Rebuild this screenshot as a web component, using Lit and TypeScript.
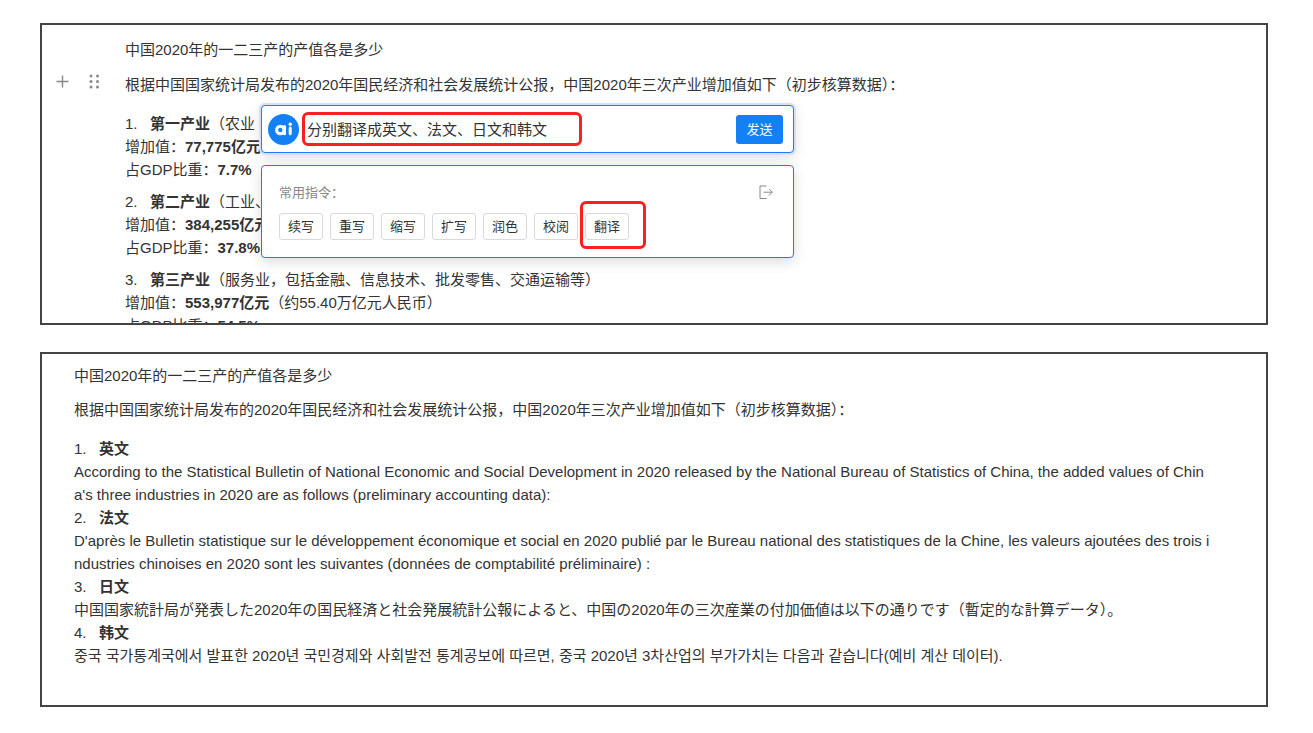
import { LitElement, html, svg, css } from "lit";
import { customElement } from "lit/decorators.js";

interface Industry {
  name: string;
  note: string;
  value: string;
  valueNote: string;
  share: string;
}

interface Translation {
  name: string;
  lang: string;
  text: string;
}

const TITLE = "中国2020年的一二三产的产值各是多少";
const INTRO =
  "根据中国国家统计局发布的2020年国民经济和社会发展统计公报，中国2020年三次产业增加值如下（初步核算数据）：";

const INDUSTRIES: Industry[] = [
  { name: "第一产业", note: "（农业", value: "77,775亿元", valueNote: "", share: "7.7%" },
  { name: "第二产业", note: "（工业、", value: "384,255亿元", valueNote: "", share: "37.8%" },
  {
    name: "第三产业",
    note: "（服务业，包括金融、信息技术、批发零售、交通运输等）",
    value: "553,977亿元",
    valueNote: "（约55.40万亿元人民币）",
    share: "54.5%",
  },
];

const TRANSLATIONS: Translation[] = [
  {
    name: "英文",
    lang: "en",
    text: "According to the Statistical Bulletin of National Economic and Social Development in 2020 released by the National Bureau of Statistics of China, the added values of China's three industries in 2020 are as follows (preliminary accounting data):",
  },
  {
    name: "法文",
    lang: "fr",
    text: "D'après le Bulletin statistique sur le développement économique et social en 2020 publié par le Bureau national des statistiques de la Chine, les valeurs ajoutées des trois industries chinoises en 2020 sont les suivantes (données de comptabilité préliminaire) :",
  },
  {
    name: "日文",
    lang: "ja",
    text: "中国国家統計局が発表した2020年の国民経済と社会発展統計公報によると、中国の2020年の三次産業の付加価値は以下の通りです（暫定的な計算データ）。",
  },
  {
    name: "韩文",
    lang: "ko",
    text: "중국 국가통계국에서 발표한 2020년 국민경제와 사회발전 통계공보에 따르면, 중국 2020년 3차산업의 부가가치는 다음과 같습니다(예비 계산 데이터).",
  },
];

const COMMANDS = ["续写", "重写", "缩写", "扩写", "润色", "校阅", "翻译"];

@customElement("ai-assistant")
class AiAssistant extends LitElement {
  static styles = css`
    :host {
      display: flex;
      flex-direction: column;
      gap: 12px;
      color: #333;
    }
    .prompt,
    .menu {
      box-sizing: border-box;
      background: #fff;
      border: 1px solid #1a7df5;
      border-radius: 4px;
    }
    .prompt {
      display: flex;
      align-items: center;
      gap: 3px;
      height: 48px;
      padding: 0 10px 0 6px;
      box-shadow: 0 0 0 2px #d6e0fb, 0 4px 14px rgba(0, 0, 0, 0.14);
    }
    .logo {
      flex: none;
      width: 31px;
      height: 31px;
    }
    .field {
      display: flex;
      flex: none;
      box-sizing: border-box;
      width: 280px;
      height: 34px;
      border: 3px solid #fb2020;
      border-radius: 6px;
    }
    .input {
      flex: 1;
      min-width: 0;
      padding: 0 2px;
      border: 0;
      outline: 0;
      background: none;
      color: inherit;
      font: inherit;
    }
    .send {
      margin-left: auto;
      width: 47px;
      height: 29px;
      padding: 0;
      border: 0;
      border-radius: 3px;
      background: #1480f5;
      color: #fff;
      font: inherit;
      font-size: 13px;
    }
    .menu {
      padding: 16px 17px 17px;
      font-size: 13px;
      box-shadow: 0 4px 14px rgba(0, 0, 0, 0.14);
    }
    .head {
      display: flex;
      align-items: center;
      justify-content: space-between;
      height: 20px;
      padding-right: 2px;
      color: #888;
    }
    .exit {
      display: flex;
      padding: 0;
      border: 0;
      background: none;
      color: #888;
    }
    .exit-icon {
      width: 16px;
      height: 16px;
    }
    .commands {
      display: flex;
      gap: 7px;
      margin-top: 11px;
    }
    .item {
      position: relative;
      display: flex;
    }
    .command {
      box-sizing: border-box;
      width: 44px;
      height: 27px;
      padding: 0;
      border: 1px solid #d9d9d9;
      border-radius: 3px;
      background: #fff;
      color: inherit;
      font: inherit;
    }
    .mark {
      position: absolute;
      inset: -12px -17px -9px -5px;
      border: 3px solid #fb2020;
      border-radius: 6px;
      pointer-events: none;
    }
  `;

  render() {
    return html`
      <div class="prompt">
        <svg class="logo" viewBox="0 0 31 31" aria-hidden="true">
          <circle cx="15.500" cy="15.500" r="15.500" fill="#1480f5" />
          <g fill="none" stroke="#fff" stroke-width="3" stroke-linecap="round">
            <circle cx="12.300" cy="16" r="3.700" />
            <path d="M16.500 12.500v7.200M22.200 14v5.700" />
          </g>
          <circle cx="22.200" cy="10.300" r="1.700" fill="#fff" />
        </svg>
        <div class="field">
          <input class="input" type="text" aria-label="指令" .value=${"分别翻译成英文、法文、日文和韩文"} />
        </div>
        <button class="send" type="button">发送</button>
      </div>
      <div class="menu">
        <div class="head">
          <span>常用指令：</span>
          <button class="exit" type="button" aria-label="退出">
            <svg class="exit-icon" viewBox="0 0 16 16" fill="none" stroke="currentColor">
              <path d="M8.500 2H2v12.500h6.500M5.500 8.200h8.700M11 4.900l3.300 3.300l-3.300 3.300" />
            </svg>
          </button>
        </div>
        <div class="commands">
          ${COMMANDS.map(
            (c) => html`<div class="item">
              <button class="command" type="button">${c}</button>
              ${c === "翻译" ? html`<span class="mark"></span>` : ""}
            </div>`
          )}
        </div>
      </div>
    `;
  }
}

@customElement("app-root")
class AppRoot extends LitElement {
  static styles = css`
    :host {
      display: flex;
      flex-direction: column;
      gap: 27px;
      box-sizing: border-box;
      min-height: 100vh;
      padding: 23px 45px 26px 40px;
      background: #fff;
      color: #333;
      font-family: "Liberation Sans", "Noto Sans CJK SC", sans-serif;
      font-size: 15px;
      line-height: 23px;
    }
    .panel {
      box-sizing: border-box;
      border: 2px solid #444;
    }
    .source {
      position: relative;
      display: grid;
      grid-template-columns: 83px 1fr;
      align-content: start;
      height: 302px;
      padding: 13px 24px 0 0;
      overflow: hidden;
    }
    .result {
      padding: 10px 55px 38px 32px;
      word-break: break-all;
    }
    .text,
    .list {
      margin: 0;
      padding: 0;
    }
    .source .text,
    .source .list {
      grid-column: 2;
    }
    .intro {
      margin-top: 12px;
    }
    .result .intro {
      margin-top: 11px;
    }
    .tools {
      display: flex;
      align-items: center;
      gap: 17px;
      padding-left: 13px;
      margin-top: 6px;
    }
    .tool {
      display: flex;
      padding: 0;
      border: 0;
      background: none;
      color: #888;
    }
    .tool-icon {
      width: 15px;
      height: 15px;
    }
    .list {
      display: flex;
      flex-direction: column;
      margin-top: 16px;
      list-style: none;
    }
    .source .list {
      gap: 9px;
    }
    .line {
      display: block;
      white-space: nowrap;
    }
    .num {
      display: inline-block;
      width: 25px;
    }
    .body {
      display: block;
    }
    .body:lang(ja) {
      font-family: "Liberation Sans", "Noto Sans CJK JP", sans-serif;
    }
    .body:lang(ko) {
      font-family: "Liberation Sans", "Noto Sans CJK KR", sans-serif;
    }
    .assistant {
      position: absolute;
      top: 80px;
      left: 219px;
      width: 533px;
    }
  `;

  render() {
    return html`
      <section class="panel source">
        <p class="text">${TITLE}</p>
        <div class="tools">
          <button class="tool" type="button" aria-label="添加">
            <svg class="tool-icon" viewBox="0 0 15 15" fill="none" stroke="currentColor" stroke-width="1.400">
              <path d="M7.500 1.500v12M1.500 7.500h12" />
            </svg>
          </button>
          <button class="tool" type="button" aria-label="拖动">
            <svg class="tool-icon" viewBox="0 0 15 15" fill="currentColor">
              ${[2, 7.5, 13].map((y) => [4, 10.5].map((x) => svg`<circle cx=${x} cy=${y} r="1.500" />`))}
            </svg>
          </button>
        </div>
        <p class="text intro">${INTRO}</p>
        <ol class="list">
          ${INDUSTRIES.map(
            (d, i) => html`<li>
              <span class="line"><span class="num">${i + 1}.</span><b>${d.name}</b>${d.note}</span>
              <span class="line">增加值：<b>${d.value}</b>${d.valueNote}</span>
              <span class="line">占GDP比重：<b>${d.share}</b></span>
            </li>`
          )}
        </ol>
        <ai-assistant class="assistant"></ai-assistant>
      </section>
      <section class="panel result">
        <p class="text">${TITLE}</p>
        <p class="text intro">${INTRO}</p>
        <ol class="list">
          ${TRANSLATIONS.map(
            (t, i) => html`<li>
              <span class="line"><span class="num">${i + 1}.</span><b>${t.name}</b></span>
              <span class="body" lang=${t.lang}>${t.text}</span>
            </li>`
          )}
        </ol>
      </section>
    `;
  }
}
